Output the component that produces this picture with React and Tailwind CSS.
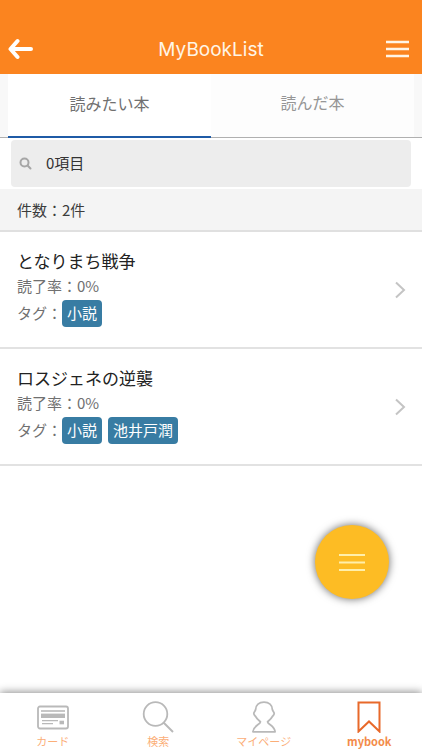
import React from "react";

const books = [
  { title: "となりまち戦争", progress: 0, tags: ["小説"] },
  { title: "ロスジェネの逆襲", progress: 0, tags: ["小説", "池井戸潤"] },
];

function BackIcon() {
  return (
    <svg width="26" height="22" viewBox="0 0 26 22" fill="none" stroke="currentColor" strokeWidth="4" strokeLinecap="round" strokeLinejoin="round">
      <path d="M23 11H4M9.5 3L2.5 11l7 8" />
    </svg>
  );
}

function CardIcon() {
  return (
    <svg width="32" height="32" viewBox="0 0 32 32" fill="none" stroke="#b9b9b9">
      <rect x="1" y="5.5" width="30" height="22" rx="2" strokeWidth="1.8" />
      <path d="M4 10h24" strokeWidth="1.6" />
      <path d="M4 14.8h24" strokeWidth="4.4" />
      <path d="M5 19.7h16M5 22.7h11" strokeWidth="1.3" />
      <path d="M22.5 21.5h4.5" strokeWidth="3.6" />
    </svg>
  );
}

function FindIcon() {
  return (
    <svg width="32" height="32" viewBox="0 0 32 32" fill="none" stroke="#b9b9b9">
      <circle cx="13.5" cy="13" r="11.8" strokeWidth="1.8" />
      <path d="M21.5 21.5L31 31" strokeWidth="2" />
    </svg>
  );
}

function PersonIcon() {
  return (
    <svg width="32" height="32" viewBox="0 0 32 32" fill="none" stroke="#b9b9b9" strokeWidth="1.8" strokeLinejoin="round">
      <path d="M16 1.2c-5 0-8.2 3-8.4 7.5-.2 1.5-1.7 2.3-1.8 3.8.1 1.7 1.3 2.2 2.1 3.4.8 2 2.7 3.4 4.5 4.9-.3 2.8-7 4-7.5 10h22.2c-.5-6-7.2-7.2-7.5-10 1.8-1.5 3.7-2.9 4.5-4.9.8-1.2 2-1.7 2.1-3.4-.1-1.5-1.6-2.3-1.8-3.8-.2-4.5-3.4-7.5-8.4-7.5z" />
    </svg>
  );
}

function BookmarkIcon() {
  return (
    <svg width="32" height="32" viewBox="0 0 32 32" fill="none" stroke="#e8692a" strokeWidth="2">
      <path d="M5.5 1.5h21v29L16 20.5 5.5 30.5z" />
    </svg>
  );
}

const tabs = [
  { label: "カード", Icon: CardIcon },
  { label: "検索", Icon: FindIcon },
  { label: "マイページ", Icon: PersonIcon },
  { label: "mybook", Icon: BookmarkIcon, active: true },
];

function BookRow({ book }) {
  return (
    <li className="border-b-2 border-[#e2e2e2]">
      <a href="#book" className="flex items-center justify-between pl-[17px] pr-4">
        <div className="pt-4 pb-5">
          <h2 className="text-[17px] leading-[25px] text-[#222]">{book.title}</h2>
          <p className="text-[15px] leading-[26px] text-[#707070]">読了率：{book.progress}%</p>
          <div className="flex items-center text-[15px] leading-7 text-[#707070]">
            <span>タグ：</span>
            <div className="flex gap-1.5">
              {book.tags.map((tag) => (
                <span key={tag} className="rounded-[4px] bg-[#387ca3] px-[5px] pb-0.5 leading-[25px] text-white">
                  {tag}
                </span>
              ))}
            </div>
          </div>
        </div>
        <svg width="12" height="18" viewBox="0 0 12 18" fill="none" stroke="#c4c4c4" strokeWidth="2">
          <path d="M2 1.5L10 9l-8 7.5" />
        </svg>
      </a>
    </li>
  );
}

export default function App() {
  return (
    <div className="flex min-h-screen flex-col bg-white font-['Inter','Noto_Sans_CJK_JP',sans-serif]">
      {/* Header */}
      <header className="flex items-center justify-between bg-[#fb841f] px-2 pt-6 pb-px text-white">
        <button aria-label="戻る" className="flex h-[49px] w-8 items-center">
          <BackIcon />
        </button>
        <h1 className="pt-1 text-[19px] text-[#fff5e6]">MyBookList</h1>
        <button aria-label="メニュー" className="flex h-[49px] w-8 items-center justify-end pr-1">
          <svg width="24" height="18" viewBox="0 0 24 18" fill="none" stroke="#fff5e6" strokeWidth="2.4">
            <path d="M0 2h23M0 9h23M0 16h23" />
          </svg>
        </button>
      </header>

      {/* List switch */}
      <div role="tablist" className="flex bg-[#f8f8f8] px-2 text-base font-['Noto_Sans_CJK_JP',sans-serif] shadow-[inset_0_-1px_0_#b0b0b0]">
        <button role="tab" aria-selected="true" className="h-16 flex-1 border-b-2 border-[#1f5ba6] bg-white pb-1 text-[#707070]">
          読みたい本
        </button>
        <button role="tab" aria-selected="false" className="h-16 flex-1 border-b border-[#b0b0b0] bg-[#fdfdfd] pb-2 text-[#969696]">
          読んだ本
        </button>
      </div>

      {/* Search */}
      <label className="mx-[11px] my-0.5 flex h-[47px] items-center gap-[14px] rounded-[4px] bg-[#ededed] px-2">
        <svg width="13" height="13" viewBox="0 0 13 13" fill="none" stroke="#a6a6a6" strokeWidth="2" strokeLinecap="round">
          <circle cx="5.5" cy="5.5" r="4" />
          <path d="M8.8 8.8L11.5 11.5" />
        </svg>
        <input
          type="text"
          aria-label="検索"
          defaultValue="0項目"
          className="min-w-0 flex-1 bg-transparent text-[15px] text-[#333] outline-none font-['Noto_Sans_CJK_JP',sans-serif]"
        />
      </label>

      <main className="flex-1 font-['Noto_Sans_CJK_JP',sans-serif]">
        <p className="border-b-2 border-[#e0e0e0] bg-[#f4f4f4] pl-[17px] text-[15px] leading-[41px] text-[#3c3c3c]">
          件数：2件
        </p>
        <ul>
          {books.map((book) => (
            <BookRow key={book.title} book={book} />
          ))}
        </ul>
      </main>

      {/* Floating menu */}
      <button
        aria-label="操作"
        className="fixed right-[33px] bottom-[151px] flex size-[74px] items-center justify-center rounded-full bg-[#fdbc24] shadow-[0_0_8px_rgba(0,0,0,0.6)]"
      >
        <svg width="26" height="18" viewBox="0 0 26 18" fill="none" stroke="#ffefaa" strokeWidth="2">
          <path d="M0 2h26M0 9.5h26M0 17h26" />
        </svg>
      </button>

      {/* Bottom navigation */}
      <nav className="sticky bottom-0 grid grid-cols-4 bg-white shadow-[0_-1px_8px_rgba(0,0,0,0.45)] font-['Noto_Sans_CJK_JP',sans-serif]">
        {tabs.map(({ label, Icon, active }) => (
          <a key={label} href="#tab" className="flex flex-col items-center pt-2 pb-px">
            <Icon />
            <span className={active ? "text-[11px] leading-4 font-bold text-[#f38b4a]" : "text-[11px] leading-4 text-[#fbae78]"}>
              {label}
            </span>
          </a>
        ))}
      </nav>
    </div>
  );
}
